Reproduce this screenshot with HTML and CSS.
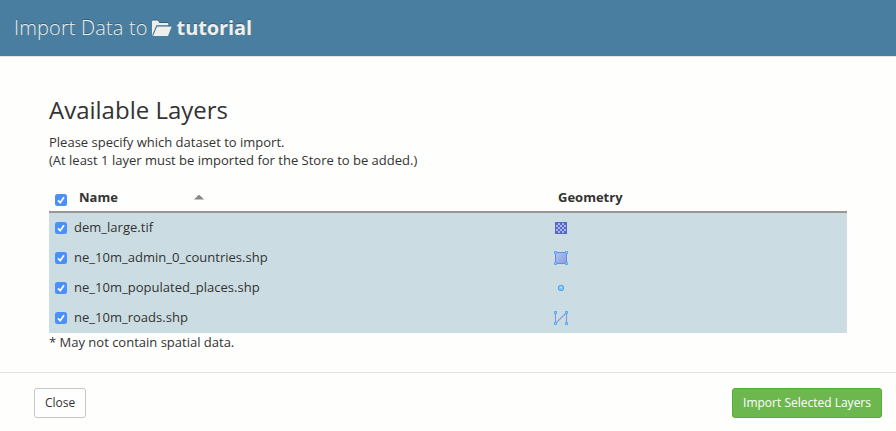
FILE: index.html
```html
<!DOCTYPE html>
<html lang="en">
<head>
<meta charset="utf-8">
<title>Import Data</title>
<link rel="stylesheet" href="styles.css">
</head>
<body>
<header class="modal-header">
  <h1 class="title"><span>Import Data to</span>
    <svg class="folder" width="20" height="17" viewBox="0 0 20 17"><path d="M0 16V1.2Q0 .4.8.4H5.8L7.5 3H15.5Q16.3 3 16.3 4V5.3H4.4L.7 14Z"/><path d="M5 6.4H19.7L16 16H1Z"/></svg>
    <strong>tutorial</strong></h1>
</header>
<main class="modal-body">
  <h2>Available Layers</h2>
  <p class="intro">Please specify which dataset to import.<br>(At least 1 layer must be imported for the Store to be added.)</p>
  <div class="layers">
    <div class="row head">
      <span class="check"><svg viewBox="0 0 12 12"><path d="M3 6.4 5.2 8.7 9 3.2"/></svg></span>
      <span class="name">Name</span><span class="sort"></span>
      <span class="geometry">Geometry</span>
    </div>
    <div class="row">
      <span class="check"><svg viewBox="0 0 12 12"><path d="M3 6.4 5.2 8.7 9 3.2"/></svg></span>
      <span class="name">dem_large.tif</span>
      <svg class="icon" viewBox="0 0 16 16"><path fill="#5966c8" d="M2 2h12v12H2z"/><path fill="#a5b7ed" d="M5 3h2v2H5zM9 3h2v2H9zM3 5h2v2H3zM7 5h2v2H7zM11 5h2v2h-2zM5 7h2v2H5zM9 7h2v2H9zM3 9h2v2H3zM7 9h2v2H7zM11 9h2v2h-2zM5 11h2v2H5zM9 11h2v2H9z"/></svg>
    </div>
    <div class="row">
      <span class="check"><svg viewBox="0 0 12 12"><path d="M3 6.4 5.2 8.7 9 3.2"/></svg></span>
      <span class="name">ne_10m_admin_0_countries.shp</span>
      <svg class="icon" viewBox="0 0 16 16"><defs><linearGradient id="fill" x2="1" y2="1"><stop stop-color="#b1c6f1"/><stop offset="1" stop-color="#869be2"/></linearGradient></defs><path fill="url(#fill)" stroke="#7188dc" d="M2.5 2.5h11v11h-11z"/><path fill="#62adf6" d="M1 1h3v3H1zM12 1h3v3h-3zM1 12h3v3H1zM12 12h3v3h-3z"/><path fill="#91cef9" d="M2 2h1v1H2zM13 2h1v1h-1zM2 13h1v1H2zM13 13h1v1h-1z"/></svg>
    </div>
    <div class="row">
      <span class="check"><svg viewBox="0 0 12 12"><path d="M3 6.4 5.2 8.7 9 3.2"/></svg></span>
      <span class="name">ne_10m_populated_places.shp</span>
      <svg class="icon" viewBox="0 0 16 16"><rect x="5.5" y="5.5" width="5" height="5" rx="1.6" fill="#83c4f2" stroke="#4fa5e8"/><path fill="#b5e1fa" d="M7 7h2v1H7z"/></svg>
    </div>
    <div class="row">
      <span class="check"><svg viewBox="0 0 12 12"><path d="M3 6.4 5.2 8.7 9 3.2"/></svg></span>
      <span class="name">ne_10m_roads.shp</span>
      <svg class="icon" viewBox="0 0 16 16"><path fill="none" stroke="#7e98e3" stroke-width="1.1" d="M2.5 2.5v11l11-11v11"/><path fill="#62adf6" d="M1 1h3v3H1zM12 1h3v3h-3zM1 12h3v3H1zM12 12h3v3h-3z"/><path fill="#91cef9" d="M2 2h1v1H2zM13 2h1v1h-1zM2 13h1v1H2zM13 13h1v1h-1z"/></svg>
    </div>
  </div>
  <p class="note">* May not contain spatial data.</p>
</main>
<footer class="modal-footer">
  <button class="btn">Close</button>
  <button class="btn primary">Import Selected Layers</button>
</footer>
</body>
</html>
```
FILE: styles.css
```css
* { box-sizing: border-box; }
body {
  margin: 0;
  height: 431px;
  display: flex;
  flex-direction: column;
  overflow: hidden;
  background: #fefefd;
  color: #333;
  font: 13px/18px "Open Sans", sans-serif;
}
h1, h2, p { margin: 0; }
.modal-header {
  height: 57px;
  padding: 14px 14px 0;
  background: #4a7ea1;
  border-bottom: 1px solid #e1e5e7;
  color: #eeefeb;
  text-shadow: 0 -1px 0 #305f80;
}
.title {
  display: flex;
  align-items: center;
  font-size: 20px;
  line-height: 28px;
  font-weight: 300;
}
.title span { letter-spacing: .14px; }
.title strong { font-weight: 700; letter-spacing: -.1px; }
.folder { margin: 0 5px 0 4px; fill: #eeefeb; filter: drop-shadow(0 -1px 0 #305f80); }
.modal-body { flex: 1; padding: 37px 49px 0; }
h2 { font-size: 24px; line-height: 32px; font-weight: 400; }
.intro { margin-top: 7px; }
.layers { margin-top: 14px; }
.row {
  display: flex;
  align-items: center;
  height: 30px;
  padding-left: 6px;
  background: #ccdce3;
}
.head {
  background: none;
  border-bottom: 2px solid #999796;
  font-weight: 700;
}
.check {
  display: block;
  width: 12px;
  height: 12px;
  margin-right: 7px;
  border-radius: 2.5px;
  background: #4990fc;
}
.check svg { display: block; width: 12px; height: 12px; }
.check path { fill: none; stroke: #fff; stroke-width: 1.7; }
.name { width: 479px; padding-bottom: 2px; letter-spacing: .02px; }
.head .check { margin: 6px 12px 0 0; }
.head .name { width: 115px; padding: 0; letter-spacing: 0; }
.sort {
  width: 10px;
  height: 5px;
  background: #888;
  clip-path: polygon(50% 0, 100% 100%, 0 100%);
}
.geometry { margin-left: 354px; }
.icon { width: 16px; height: 16px; }
.modal-footer {
  height: 59px;
  display: flex;
  justify-content: space-between;
  padding: 15px 14px 0 34px;
  border-top: 1px solid #e3e3e3;
}
.btn {
  height: 30px;
  padding: 0 10px;
  border: 1px solid #c6c6c6;
  border-radius: 3px;
  background: #fefefe;
  color: #333;
  font: 12px/18px "Open Sans", sans-serif;
}
.primary { background: #6db84e; border-color: #58aa36; color: #fff; }
```
